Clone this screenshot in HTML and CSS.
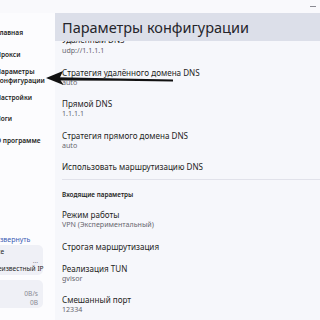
FILE: index.html
```html
<!DOCTYPE html>
<html lang="ru">
<head>
    <meta charset="UTF-8">
    <meta name="viewport" content="width=device-width, initial-scale=1.0">
    <title>Параметры конфигурации</title>
    <link rel="stylesheet" href="styles.css">
</head>
<body>
    <div class="titlebar">
        <span class="min-btn"></span>
    </div>

    <div class="app">
        <aside class="sidebar">
            <div class="sidebar-inner">
                <nav class="nav">
                    <div class="nav-item">Главная</div>
                    <div class="nav-item">Прокси</div>
                    <div class="nav-item active">Параметры<br>конфигурации</div>
                    <div class="nav-item">Настройки</div>
                    <div class="nav-item">Логи</div>
                    <div class="nav-item">О программе</div>
                </nav>

                <div class="side-footer">
                    <div class="expand-link">Развернуть</div>
                    <div class="info-card">
                        <div class="info-row">Все</div>
                        <div class="info-row right dim">...</div>
                        <div class="info-row">Неизвестный IP</div>
                    </div>
                    <div class="info-card traffic">
                        <div class="info-row right dim">0B/s</div>
                        <div class="info-row right dim">0B</div>
                    </div>
                </div>
            </div>
        </aside>

        <main class="main">
            <header class="page-header">Параметры конфигурации</header>

            <div class="content">
                <div class="list">
                    <div class="item first">
                        <div class="label">Удалённый DNS</div>
                        <div class="value">udp://1.1.1.1</div>
                    </div>
                    <div class="item">
                        <div class="label">Стратегия удалённого домена DNS</div>
                        <div class="value">auto</div>
                    </div>
                    <div class="item">
                        <div class="label">Прямой DNS</div>
                        <div class="value">1.1.1.1</div>
                    </div>
                    <div class="item">
                        <div class="label">Стратегия прямого домена DNS</div>
                        <div class="value">auto</div>
                    </div>
                    <div class="item">
                        <div class="label">Использовать маршрутизацию DNS</div>
                    </div>

                    <div class="divider"></div>
                    <div class="section-title">Входящие параметры</div>

                    <div class="item">
                        <div class="label">Режим работы</div>
                        <div class="value">VPN (Экспериментальный)</div>
                    </div>
                    <div class="item">
                        <div class="label">Строгая маршрутизация</div>
                    </div>
                    <div class="item">
                        <div class="label">Реализация TUN</div>
                        <div class="value">gvisor</div>
                    </div>
                    <div class="item">
                        <div class="label">Смешанный порт</div>
                        <div class="value">12334</div>
                    </div>
                </div>
            </div>
        </main>
    </div>

    <!-- стрелка-пометка поверх скриншота -->
    <svg class="annotation" width="320" height="320" viewBox="0 0 320 320">
        <path d="M58 77.2 L120 78.4 L173 79.6 L173 81.4 L120 80.8 L58 80.6 Z" fill="#111"/>
        <path d="M46 78 L63 71 L59.5 78.6 L63.5 85 Z" fill="#111"/>
    </svg>
</body>
</html>
```

FILE: styles.css
```css
:root {
    --text-color: #1f1f24;
    --muted-color: #66666e;
    --sidebar-bg: #fcfcfe;
    --main-bg: #f6f7fb;
    --header-bg: #dcdfe9;
    --card-bg: #eff0f6;
    --link-color: #3a5db4;
}

* {
    box-sizing: border-box;
    margin: 0;
    padding: 0;
}

html, body {
    width: 320px;
    height: 320px;
    overflow: hidden;
}

body {
    font-family: 'Noto Sans', 'Open Sans', Arial, sans-serif;
    color: var(--text-color);
    background-color: var(--sidebar-bg);
    position: relative;
}

.titlebar {
    height: 13px;
    display: flex;
    justify-content: flex-end;
    align-items: center;
    padding-right: 4px;
    background-color: #f9f9fc;
}

.min-btn {
    width: 6px;
    height: 1px;
    background-color: #8a8a92;
}

.app {
    display: flex;
    height: 307px;
}

/* боковая панель */
.sidebar {
    width: 55px;
    flex-shrink: 0;
    overflow: hidden;
    background-color: var(--sidebar-bg);
}

.sidebar-inner {
    margin-left: -12px;
    width: 56px;
    height: 100%;
    display: flex;
    flex-direction: column;
    padding-bottom: 12px;
}

.nav {
    padding-top: 9px;
    padding-left: 8px;
}

.nav-item {
    height: 21.5px;
    display: flex;
    align-items: center;
    font-size: 6.6px;
    font-weight: 600;
    line-height: 9px;
    white-space: nowrap;
}

.side-footer {
    margin-top: auto;
}

.expand-link {
    font-size: 7px;
    line-height: 8px;
    color: var(--link-color);
    padding-left: 4px;
    margin-bottom: 1px;
}

.info-card {
    background-color: var(--card-bg);
    border-radius: 5px;
    padding: 3px 3px 1.5px 5px;
    margin-bottom: 5px;
    width: 55px;
}

.info-card.traffic {
    padding: 10px 3px 1px 5px;
    margin-bottom: 0;
}

.info-row {
    font-size: 6.6px;
    line-height: 8.5px;
    white-space: nowrap;
}

.info-row.right {
    text-align: right;
    padding-right: 2px;
}

.info-row.dim {
    color: #8a8a94;
}

/* основная область */
.main {
    flex: 1;
    display: flex;
    flex-direction: column;
    background-color: var(--main-bg);
    min-width: 0;
}

.page-header {
    height: 28px;
    flex-shrink: 0;
    background-color: var(--header-bg);
    font-size: 14.5px;
    line-height: 28px;
    padding-left: 7px;
    color: #25252b;
    position: relative;
    z-index: 1;
}

.content {
    flex: 1;
    overflow: hidden;
}

.list {
    margin-top: -11px;
    padding-left: 7px;
}

.item {
    padding: 6px 0;
}

/* первый пункт прокручен под заголовок */
.item.first .label {
    line-height: 8px;
}

.item.first .value {
    padding-top: 2px;
}

.label {
    font-size: 8.1px;
    line-height: 10px;
    white-space: nowrap;
}

.value {
    font-size: 7.1px;
    line-height: 9.5px;
    color: var(--muted-color);
    white-space: nowrap;
}

.divider {
    height: 1px;
    background-color: #e1e2ea;
    margin-top: 1px;
}

.section-title {
    font-size: 6.4px;
    font-weight: 600;
    line-height: 10px;
    padding: 10px 0 4px;
}

.annotation {
    position: absolute;
    left: 0;
    top: 0;
    pointer-events: none;
}
```
